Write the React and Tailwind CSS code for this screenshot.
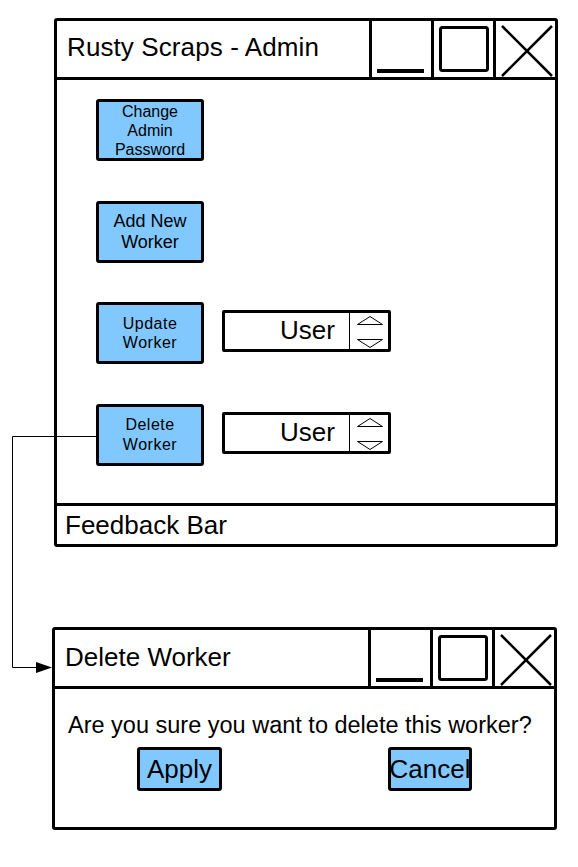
import React from 'react';

function TitleButtons() {
  return (
    <div className="flex h-full">
      <div className="w-[62px] h-full border-l-[3px] border-black">
        <svg width="59" height="56" viewBox="0 0 59 56">
          <rect x="5" y="48" width="47" height="4" fill="black" />
        </svg>
      </div>
      <div className="w-[62px] h-full border-l-[3px] border-black">
        <svg width="59" height="56" viewBox="0 0 59 56">
          <rect x="6.5" y="6.5" width="47" height="43" rx="2" fill="none" stroke="black" strokeWidth="3" />
        </svg>
      </div>
      <div className="w-[62px] h-full border-l-[3px] border-black">
        <svg width="59" height="56" viewBox="0 0 59 56">
          <path d="M6 5 L56 55 M56 5 L6 55" stroke="black" strokeWidth="2.5" fill="none" />
        </svg>
      </div>
    </div>
  );
}

function BlueButton({ children, className }) {
  return (
    <div className={`w-[108px] h-[62px] shrink-0 bg-[#80c8ff] border-[3px] border-black rounded-[3px] flex flex-col items-center justify-center text-center text-black ${className}`}>
      {children}
    </div>
  );
}

function Spinner() {
  return (
    <div className="w-[169px] h-[42px] border-[3px] border-black rounded-[2px] flex bg-white">
      <div className="flex-1 flex items-center justify-end pr-[14px] text-[26px] leading-none pb-[2px]">User</div>
      <div className="w-[39px] h-full border-l border-black">
        <svg width="39" height="36" viewBox="0 0 39 36">
          <path d="M7.5 11.5 L20 3.5 L32.5 11.5 Z" fill="none" stroke="black" strokeWidth="1" />
          <path d="M7.5 26.5 L20 34.5 L32.5 26.5 Z" fill="none" stroke="black" strokeWidth="1" />
        </svg>
      </div>
    </div>
  );
}

export default function App() {
  return (
    <div className="relative w-[578px] h-[867px] bg-white text-black overflow-hidden" style={{ fontFamily: '"Liberation Sans", Arial, sans-serif' }}>
      {/* Main admin window */}
      <div className="ml-[54px] pt-[18px]">
        <div className="w-[504px] h-[529px] border-[3px] border-black rounded-[3px] flex flex-col">
          <div className="h-[59px] shrink-0 border-b-[3px] border-black flex">
            <div className="flex-1 flex items-center pl-[10px] pb-[4px] text-[26px] leading-none tracking-[0.1px]">Rusty Scraps - Admin</div>
            <TitleButtons />
          </div>

          <div className="flex-1 pl-[39px] pt-[19px] flex flex-col gap-[40px]">
            <BlueButton className="text-[16px] leading-[19px]">
              <span>Change</span>
              <span>Admin</span>
              <span>Password</span>
            </BlueButton>
            <BlueButton className="text-[18px] leading-[21px]">
              <span>Add New</span>
              <span>Worker</span>
            </BlueButton>
            <div className="flex items-center gap-[18px] -mt-px">
              <BlueButton className="text-[16px] leading-[19px] tracking-[0.5px]">
                <span>Update</span>
                <span>Worker</span>
              </BlueButton>
              <div className="-mt-[4px]">
                <Spinner />
              </div>
            </div>
            <div className="flex items-center gap-[18px]">
              <BlueButton className="text-[16px] leading-[20px] tracking-[0.5px]">
                <span>Delete</span>
                <span>Worker</span>
              </BlueButton>
              <div className="-mt-[4px]">
                <Spinner />
              </div>
            </div>
          </div>

          <div className="h-[41px] shrink-0 border-t-[3px] border-black flex items-center pl-[8px] text-[26px] leading-none">
            Feedback Bar
          </div>
        </div>
      </div>

      {/* Delete confirmation dialog */}
      <div className="ml-[52px] mt-[80px]">
        <div className="w-[505px] h-[203px] border-[3px] border-black rounded-[3px] flex flex-col">
          <div className="h-[59px] shrink-0 border-b-[3px] border-black flex">
            <div className="flex-1 flex items-center pl-[10px] pb-[2px] text-[26px] leading-none">Delete Worker</div>
            <TitleButtons />
          </div>
          <div className="flex-1 flex flex-col pt-[22px]">
            <div className="pl-[13px] text-[23.5px] leading-[28px] whitespace-nowrap">
              Are you sure you want to delete this worker?
            </div>
            <div className="flex mt-[8px] pl-[82px] gap-[166px]">
              <div className="w-[85px] h-[44px] bg-[#80c8ff] border-[3px] border-black rounded-[3px] flex items-center justify-center text-[26px] leading-none">
                Apply
              </div>
              <div className="w-[84px] h-[44px] bg-[#80c8ff] border-[3px] border-black rounded-[3px] flex items-center justify-center text-[26px] leading-none whitespace-nowrap">
                Cancel
              </div>
            </div>
          </div>
        </div>
      </div>

      {/* Connector arrow from Delete Worker to dialog */}
      <svg className="absolute top-0 left-0 pointer-events-none" width="578" height="867" viewBox="0 0 578 867">
        <path d="M96 436.5 H12.5 V667.5 H38" fill="none" stroke="black" strokeWidth="1" />
        <polygon points="36,662 52,667.5 36,673" fill="black" />
      </svg>
    </div>
  );
}
